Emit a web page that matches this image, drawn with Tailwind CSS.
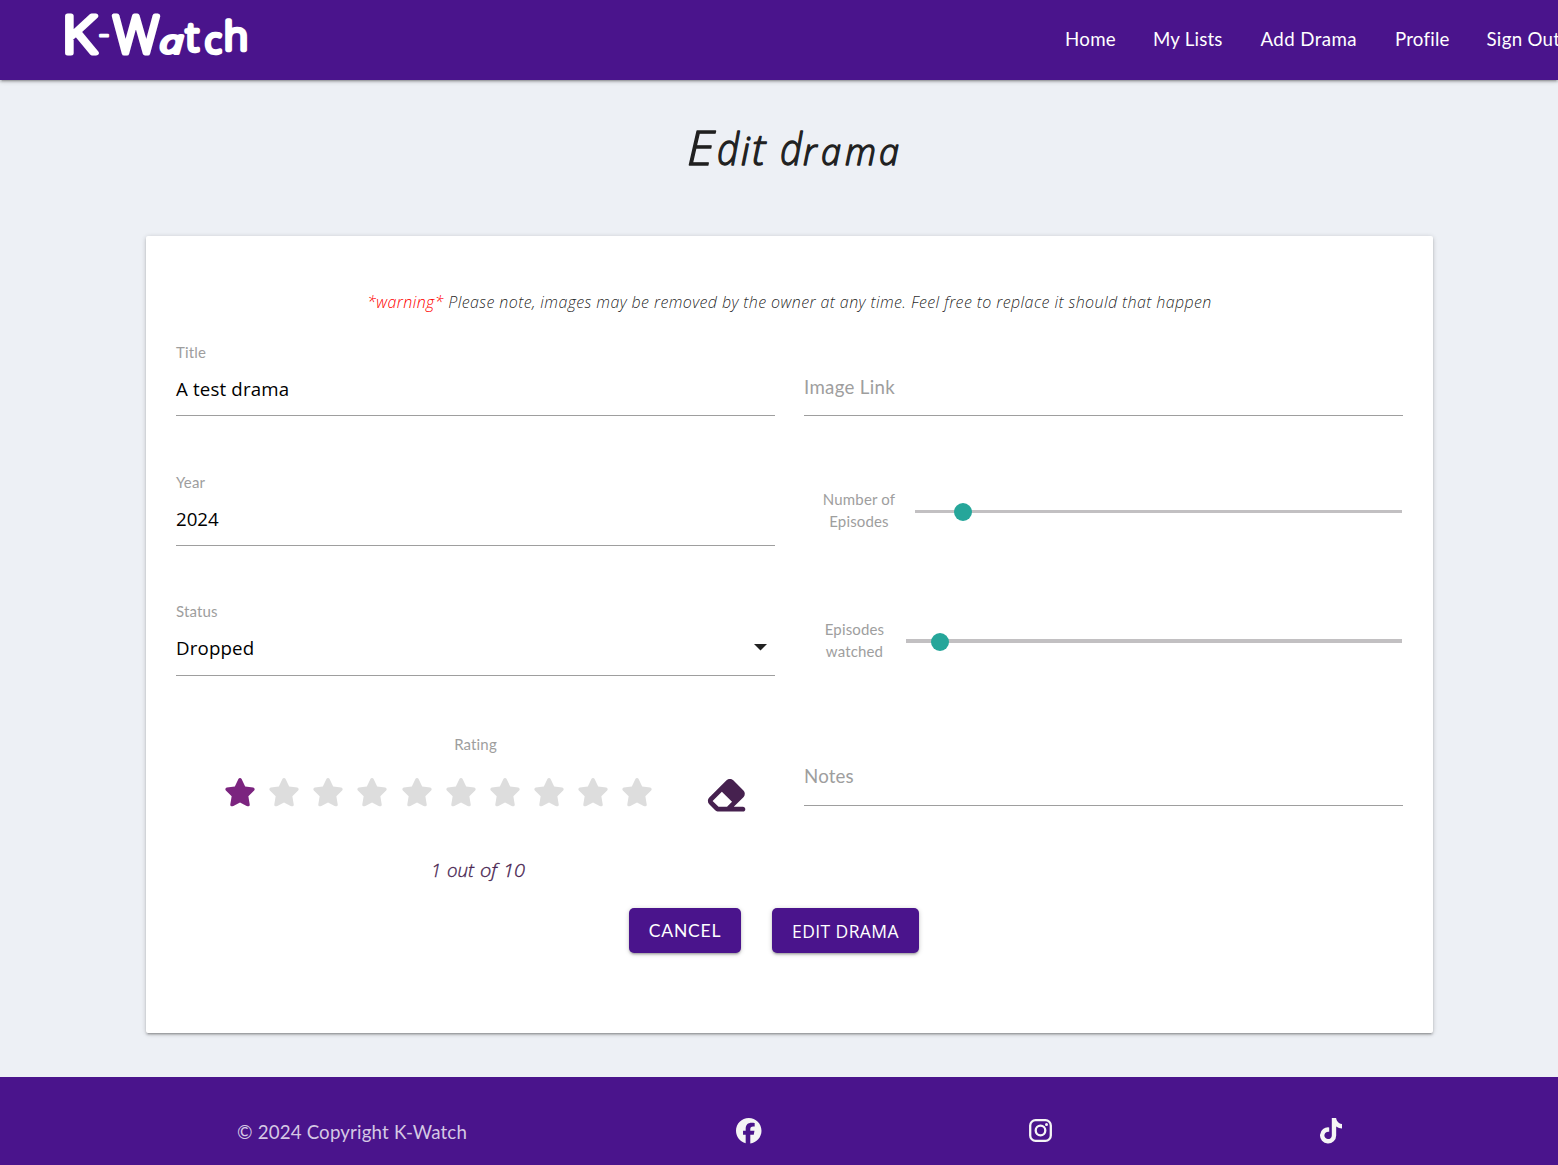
<!DOCTYPE html>
<html lang="en">
<head>
<meta charset="utf-8">
<title>K-Watch</title>
<script src="https://cdn.jsdelivr.net/npm/@tailwindcss/browser@4"></script>
</head>
<body class="h-[1165px] w-[1558px] overflow-hidden bg-[#edf0f5] font-[Lato,sans-serif] text-black/87">
<svg class="hidden">
  <symbol id="star" viewBox="0 0 576 512"><path d="M316.9 18C311.6 7 300.4 0 288.1 0s-23.4 7-28.8 18L195 150.3 51.4 171.5c-12 1.8-22 10.2-25.7 21.7s-.7 24.2 7.9 32.7L137.8 329 113.2 474.7c-2 12 3 24.2 12.9 31.3s23 8 33.8 2.3l128.3-68.5 128.3 68.5c10.8 5.7 23.9 4.9 33.8-2.3s14.9-19.3 12.9-31.3L438.5 329 542.7 225.9c8.6-8.5 11.7-21.2 7.9-32.7s-13.7-19.9-25.7-21.7L381.2 150.3 316.9 18z"/></symbol>
</svg>

<nav class="relative flex h-20 items-center bg-[#4a148c] text-[18.7px] text-white shadow-[0_2px_2px_0_rgba(0,0,0,.14),0_3px_1px_-2px_rgba(0,0,0,.12),0_1px_5px_0_rgba(0,0,0,.2)]">
  <svg class="h-20 w-[1065px] shrink-0 overflow-visible fill-white stroke-white stroke-[5] font-['Open_Sans',sans-serif] font-light" viewBox="0 0 1065 80" stroke-linejoin="round">
    <text><tspan x="62" y="53" font-size="52" textLength="34" lengthAdjust="spacingAndGlyphs">K</tspan><tspan x="99" y="44" font-size="31" stroke-width="2.5">-</tspan><tspan x="113" y="53" font-size="52" textLength="46" lengthAdjust="spacingAndGlyphs">W</tspan><tspan x="160" y="53" font-size="32" font-style="italic" stroke-width="4" textLength="23" lengthAdjust="spacingAndGlyphs">a</tspan><tspan x="186" y="51" font-size="38" stroke-width="4.5">t</tspan><tspan x="205" y="53" font-size="34" stroke-width="4.5">c</tspan><tspan x="224" y="50" font-size="39" stroke-width="4.5" textLength="24" lengthAdjust="spacingAndGlyphs">h</tspan></text>
  </svg>
  <a class="w-[88px] shrink-0 -translate-y-px tracking-[0.3px]">Home</a>
  <a class="w-[107.5px] shrink-0 -translate-y-px tracking-[0.2px]">My Lists</a>
  <a class="w-[134.5px] shrink-0 -translate-y-px tracking-[0.4px]">Add Drama</a>
  <a class="w-[91.5px] shrink-0 -translate-y-px tracking-[0.2px]">Profile</a>
  <a class="shrink-0 -translate-y-px whitespace-nowrap tracking-[0.3px]">Sign Out</a>
</nav>

<header class="flex h-[156px] justify-center">
  <svg class="ml-8 mt-8 h-20 w-[250px] overflow-visible fill-[#212121] stroke-[#212121] stroke-[1.3] font-['Open_Sans',sans-serif] font-light italic" viewBox="670 112 250 80" stroke-linejoin="round">
    <text y="164.5"><tspan x="687" font-size="48" textLength="27" lengthAdjust="spacingAndGlyphs">E</tspan><tspan x="717" font-size="44" textLength="22" lengthAdjust="spacingAndGlyphs">d</tspan><tspan x="741" font-size="38">i</tspan><tspan x="752" font-size="42">t</tspan> <tspan x="780" font-size="44" textLength="22" lengthAdjust="spacingAndGlyphs">d</tspan><tspan x="803" font-size="36">r</tspan><tspan x="821" font-size="36">a</tspan><tspan x="845" font-size="36" textLength="31" lengthAdjust="spacingAndGlyphs">m</tspan><tspan x="879" font-size="36">a</tspan></text>
  </svg>
</header>

<main class="ml-[146px] h-[797px] w-[1287px] rounded-[2px] bg-white px-[30px] pt-[52px] shadow-[0_2px_2px_0_rgba(0,0,0,.14),0_3px_1px_-2px_rgba(0,0,0,.12),0_1px_5px_0_rgba(0,0,0,.2)]">
  <p class="h-[43px] whitespace-nowrap text-center font-['Open_Sans',sans-serif] text-[16px] font-light leading-[29px] tracking-[0.4px] italic"><span class="text-[#f00]">*warning*</span> Please note, images may be removed by the owner at any time. Feel free to replace it should that happen</p>

  <div class="grid grid-cols-[599px_599px] grid-rows-[85px_130px_130px_232px] gap-x-[29px] text-[15px] tracking-[0.15px] text-[#9e9e9e]">
    <label class="flex flex-col justify-end border-b border-[#9e9e9e]">
      <span class="h-[22px] leading-[22px]">Title</span>
      <span class="h-[52px] font-['Open_Sans',sans-serif] text-[18.7px] leading-[52px] text-black">A test drama</span>
    </label>
    <label class="flex flex-col justify-end border-b border-[#9e9e9e]">
      <span class="h-[55px] text-[18.7px] leading-[55px] tracking-[0.3px]">Image Link</span>
    </label>

    <label class="flex flex-col justify-end border-b border-[#9e9e9e]">
      <span class="h-[22px] leading-[22px]">Year</span>
      <span class="h-[52px] font-['Open_Sans',sans-serif] text-[18.7px] leading-[52px] tracking-normal text-black">2024</span>
    </label>
    <div class="flex items-center pt-[60px]">
      <span class="ml-[15px] w-20 -translate-y-px text-center leading-[22px]">Number of Episodes</span>
      <div class="relative ml-4 h-[3px] w-[487px] bg-[#c2c0c2]"><i class="absolute -top-[7px] left-[38.5px] size-[18px] rounded-full bg-[#26a69a]"></i></div>
    </div>

    <label class="flex flex-col justify-end border-b border-[#9e9e9e]">
      <span class="h-[22px] leading-[22px]">Status</span>
      <span class="flex h-[53px] items-start justify-between font-['Open_Sans',sans-serif] text-[18.7px] leading-[52px] text-black">Dropped
        <svg class="mr-[8px] mt-[22px] h-[6.5px] w-[13px] fill-[#212121]" viewBox="0 0 12 6"><path d="M0 0h12L6 6z"/></svg></span>
    </label>
    <div class="flex items-center pt-[60px]">
      <span class="ml-[15px] w-[71px] -translate-y-px text-center leading-[22px]">Episodes watched</span>
      <div class="relative ml-4 h-1 w-[496px] bg-[#c2c0c2]"><i class="absolute -top-[6px] left-[25px] size-[18px] rounded-full bg-[#26a69a]"></i></div>
    </div>

    <div class="pt-[57px]">
      <div class="h-[22px] text-center leading-[22px]">Rating</div>
      <div class="ml-[48px] mt-[21px] flex h-[40px] gap-[12.15px] fill-[#dddddd]">
        <svg class="mt-[2px] h-[28.5px] w-8 shrink-0 fill-[#7b247f]"><use href="#star"/></svg>
        <svg class="mt-[2px] h-[28.5px] w-8 shrink-0"><use href="#star"/></svg>
        <svg class="mt-[2px] h-[28.5px] w-8 shrink-0"><use href="#star"/></svg>
        <svg class="mt-[2px] h-[28.5px] w-8 shrink-0"><use href="#star"/></svg>
        <svg class="mt-[2px] h-[28.5px] w-8 shrink-0"><use href="#star"/></svg>
        <svg class="mt-[2px] h-[28.5px] w-8 shrink-0"><use href="#star"/></svg>
        <svg class="mt-[2px] h-[28.5px] w-8 shrink-0"><use href="#star"/></svg>
        <svg class="mt-[2px] h-[28.5px] w-8 shrink-0"><use href="#star"/></svg>
        <svg class="mt-[2px] h-[28.5px] w-8 shrink-0"><use href="#star"/></svg>
        <svg class="mt-[2px] h-[28.5px] w-8 shrink-0"><use href="#star"/></svg>
        <svg class="ml-[39.5px] h-[38px] w-[42.7px] shrink-0 fill-[#46214f]" viewBox="0 0 576 512"><path d="M290.7 57.4L57.4 290.7c-25 25-25 65.5 0 90.5l80 80c12 12 28.3 18.7 45.3 18.7H512c17.7 0 32-14.3 32-32s-14.3-32-32-32H387.9L518.6 285.3c25-25 25-65.5 0-90.5L381.3 57.4c-25-25-65.5-25-90.5 0zM297.4 416H182.6l-80-80L227.3 211.3 364.7 348.7 297.4 416z"/></svg>
      </div>
      <svg class="ml-[244px] mt-[34px] h-10 w-[120px] overflow-visible fill-[#46214f] stroke-[#46214f] stroke-[0.3] font-['Open_Sans',sans-serif] font-light tracking-normal italic" viewBox="420 850 120 40">
        <text y="877" font-size="17.5"><tspan x="431" font-size="19" textLength="10" lengthAdjust="spacingAndGlyphs">1</tspan><tspan x="447" textLength="27" lengthAdjust="spacingAndGlyphs">out</tspan><tspan x="480" textLength="17" lengthAdjust="spacingAndGlyphs">of</tspan><tspan x="503" font-size="19" textLength="22" lengthAdjust="spacingAndGlyphs">10</tspan></text>
      </svg>
    </div>
    <label class="flex h-[130px] flex-col justify-end border-b border-[#9e9e9e]">
      <span class="h-[57px] text-[18.7px] leading-[57px]">Notes</span>
    </label>
  </div>

  <div class="ml-[453px] flex gap-[31px] text-center text-white">
    <a class="h-[45px] w-[112px] rounded-[5px] bg-[#4a148c] text-[17.5px] leading-[45px] tracking-[0.8px] shadow-[0_2px_2px_0_rgba(0,0,0,.14),0_3px_1px_-2px_rgba(0,0,0,.12),0_1px_5px_0_rgba(0,0,0,.2)]">CANCEL</a>
    <a class="h-[45px] w-[147px] rounded-[5px] bg-[#4a148c] font-['Open_Sans',sans-serif] text-[17.5px] leading-[47px] tracking-[0.4px] shadow-[0_2px_2px_0_rgba(0,0,0,.14),0_3px_1px_-2px_rgba(0,0,0,.12),0_1px_5px_0_rgba(0,0,0,.2)]">EDIT DRAMA</a>
  </div>
</main>

<footer class="mt-11 flex h-[88px] bg-[#4a148c] fill-[#f5f5f5] pl-[237px] pt-[41px]">
  <span class="w-[499px] -translate-y-px text-[18.7px] leading-[30px] tracking-[0.17px] text-[#d5c8e4]">© 2024 Copyright K-Watch</span>
  <svg class="size-[25.5px]" viewBox="0 0 512 512"><path d="M512 256C512 114.6 397.4 0 256 0S0 114.6 0 256C0 376 82.7 476.8 194.2 504.5V334.2H141.4V256h52.8V222.3c0-87.1 39.4-127.5 125-127.5 16.2 0 44.2 3.2 55.7 6.4V172c-6-.6-16.5-1-29.6-1-42 0-58.2 15.9-58.2 57.2V256h83.6l-14.4 78.2H287V510.1C413.8 494.8 512 386.9 512 256z"/></svg>
  <svg class="ml-[267.5px] mt-[1px] size-[23px] fill-none stroke-[#f5f5f5] stroke-[2.3]" viewBox="0 0 23 23"><rect x="1.2" y="1.2" width="20.6" height="20.6" rx="5.4"/><circle cx="11.5" cy="11.5" r="4.8"/><circle cx="17.5" cy="5.5" r="1.5" class="fill-[#f5f5f5] stroke-none"/></svg>
  <svg class="ml-[268px] h-[25.5px] w-[22.3px]" viewBox="0 0 448 512"><path d="M448 209.9a210.1 210.1 0 0 1-122.8-39.3V349.4A162.6 162.6 0 1 1 185 188.3V278.2a74.6 74.6 0 1 0 52.2 71.2V0h88a121.2 121.2 0 0 0 1.9 22.2A122.2 122.2 0 0 0 381 102.4a121.4 121.4 0 0 0 67 20.1z"/></svg>
</footer>
</body>
</html>
